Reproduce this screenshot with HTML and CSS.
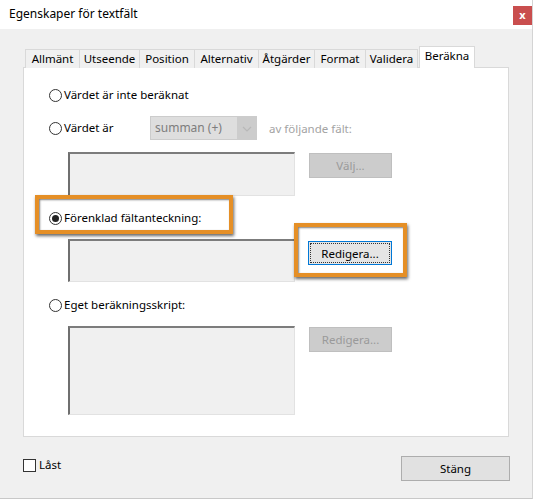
FILE: index.html
```html
<!DOCTYPE html>
<html lang="sv">
<head>
<meta charset="utf-8">
<title>Egenskaper för textfält</title>
<link rel="stylesheet" href="styles.css">
</head>
<body>
<div class="dialog">
  <div class="titlebar">
    <span class="title">Egenskaper för textfält</span>
    <span class="close">x</span>
  </div>
  <div class="body">
    <div class="tabs">
      <div class="tab w1">Allmänt</div>
      <div class="tab w2">Utseende</div>
      <div class="tab w3">Position</div>
      <div class="tab w4">Alternativ</div>
      <div class="tab w5">Åtgärder</div>
      <div class="tab w6">Format</div>
      <div class="tab w7">Validera</div>
      <div class="tab active w8">Beräkna</div>
    </div>
    <div class="panel">
      <div class="row r1">
        <span class="radio"></span><span class="label">Värdet är inte beräknat</span>
      </div>
      <div class="row r2">
        <div class="opt-fixed"><span class="radio"></span><span class="label">Värdet är</span></div>
        <div class="combo">
          <span class="combo-text">summan (+)</span>
          <span class="combo-arrow">
            <svg width="10" height="6" viewBox="0 0 10 6"><path d="M1 1 L5 5 L9 1" fill="none" stroke="#b8b8b8" stroke-width="1.2"/></svg>
          </span>
        </div>
        <span class="muted">av följande fält:</span>
      </div>
      <div class="row r3">
        <div class="field f-small"></div>
        <button class="btn disabled">Välj...</button>
      </div>
      <div class="row r4">
        <div class="highlight-wrap">
          <span class="radio checked"></span><span class="label">Förenklad fältanteckning:</span>
          <span class="hl hl-label"></span>
        </div>
      </div>
      <div class="row r5">
        <div class="field f-small2"></div>
        <div class="btn-wrap">
          <button class="btn focused"><span class="focus-ring">Redigera...</span></button>
          <span class="hl hl-btn"></span>
        </div>
      </div>
      <div class="row r6">
        <span class="radio"></span><span class="label">Eget beräkningsskript:</span>
      </div>
      <div class="row r7">
        <div class="field f-large"></div>
        <button class="btn disabled">Redigera...</button>
      </div>
    </div>
    <div class="footer">
      <div class="check"><span class="box"></span><span class="label">Låst</span></div>
      <button class="btn close-btn">Stäng</button>
    </div>
  </div>
</div>
</body>
</html>
```

FILE: styles.css
```css
* { box-sizing: border-box; }
html, body {
  margin: 0;
  padding: 0;
  background: #ffffff;
  font-family: "Noto Sans", "Open Sans", sans-serif;
  font-size: 11.5px;
  color: #000;
}
.dialog {
  width: 533px;
  height: 499px;
  display: flex;
  flex-direction: column;
  border-right: 1px solid #d4d4d4;
  border-bottom: 1px solid #c8c8c8;
}
.titlebar {
  height: 29px;
  background: #fff;
  display: flex;
  align-items: flex-start;
  justify-content: space-between;
}
.title {
  margin-left: 9px;
  margin-top: 6px;
  line-height: 16px;
  font-size: 12px;
}
.close {
  width: 19px;
  height: 19px;
  margin-top: 6px;
  background: #c94e4e;
  color: #fff;
  font-size: 11px;
  font-weight: bold;
  line-height: 18px;
  text-align: center;
}
.body {
  flex: 1;
  background: #f0f0f0;
  padding: 18px 0 0 23px;
  display: flex;
  flex-direction: column;
}
.tabs {
  display: flex;
  align-items: flex-end;
  height: 21px;
  padding-left: 2px;
  position: relative;
  z-index: 1;
  margin-bottom: -1px;
}
.tab {
  height: 19px;
  border: 1px solid #d9d9d9;
  border-bottom: none;
  border-right: none;
  background: #f0f0f0;
  text-align: center;
  line-height: 17px;
}
.tab.w7 { border-right: 1px solid #d9d9d9; }
.tab.active {
  height: 22px;
  background: #fff;
  border-right: 1px solid #d9d9d9;
  border-left: 1px solid #d9d9d9;
  line-height: 18px;
  margin-left: 1px;
}
.w1 { width: 54px; }
.w2 { width: 60px; }
.w3 { width: 55px; }
.w4 { width: 64px; }
.w5 { width: 56px; }
.w6 { width: 51px; }
.w7 { width: 53px; }
.w8 { width: 56px; }

.panel {
  width: 486px;
  height: 370px;
  background: #fff;
  border: 1px solid #d9d9d9;
  padding: 17px 0 0 25px;
  display: flex;
  flex-direction: column;
}
.row {
  display: flex;
  align-items: center;
}
.r1 { height: 20px; }
.r2 { height: 24px; margin-top: 11px; }
.r3 { height: 44px; margin-top: 12px; align-items: flex-start; padding-left: 19px; }
.r4 { height: 20px; margin-top: 12px; }
.r5 { height: 43px; margin-top: 11px; align-items: flex-start; padding-left: 19px; }
.r6 { height: 20px; margin-top: 13px; }
.r7 { height: 89px; margin-top: 11px; align-items: flex-start; padding-left: 19px; }

.radio {
  width: 13px;
  height: 13px;
  border: 1px solid #333;
  border-radius: 50%;
  background: #fff;
  display: inline-flex;
  align-items: center;
  justify-content: center;
  flex: none;
}
.radio.checked::after {
  content: "";
  width: 7px;
  height: 7px;
  border-radius: 50%;
  background: #222;
}
.label {
  margin-left: 2px;
  line-height: 16px;
}
.opt-fixed {
  width: 101px;
  display: flex;
  align-items: center;
}
.combo {
  width: 107px;
  height: 24px;
  background: #cccccc;
  display: flex;
  padding: 1px;
}
.combo-text {
  width: 86px;
  background: #dedede;
  color: #7d7d7d;
  padding-left: 4px;
  line-height: 22px;
  font-size: 12px;
}
.combo-arrow {
  flex: 1;
  display: flex;
  align-items: center;
  justify-content: center;
  padding-top: 2px;
}
.muted {
  color: #a3a3a3;
  margin-left: 12px;
}
.field {
  width: 227px;
  background: #f0f0f0;
  border-left: 2px solid #6f6f6f;
  border-top: 2px solid #7c7c7c;
  border-right: 1px solid #e2e2e2;
  border-bottom: 1px solid #e2e2e2;
}
.f-small { height: 44px; }
.f-small2 { height: 43px; }
.f-large { height: 89px; }
.btn {
  font-family: inherit;
  font-size: 11.5px;
  width: 83px;
  height: 25px;
  margin: 1px 0 0 14px;
  padding: 0;
  border: 1px solid #adadad;
  background: #e1e1e1;
  color: #000;
}
.btn.disabled {
  background: #cccccc;
  border-color: #bfbfbf;
  color: #9a9a9a;
}
.btn-wrap {
  position: relative;
  margin: 2px 0 0 13px;
}
.btn.focused {
  margin: 0;
  width: 84px;
  height: 24px;
  border: 1px solid #0078d7;
  padding: 1px;
  background: #e5e5e5;
}
.focus-ring {
  display: flex;
  height: 100%;
  align-items: center;
  justify-content: center;
  border: 1px dotted #333;
}
.highlight-wrap {
  position: relative;
  display: flex;
  align-items: center;
  width: 170px;
}
.hl {
  position: absolute;
  border: 4px solid #e58f26;
  box-shadow: 1px 2px 3px rgba(0,0,0,0.6), inset 1px 1px 2px rgba(0,0,0,0.5);
  pointer-events: none;
}
.hl-label {
  top: -15px;
  bottom: -8px;
  left: -14px;
  right: -14px;
}
.hl-btn {
  top: -18px;
  bottom: -12px;
  left: -14px;
  right: -15px;
}
.footer {
  display: flex;
  justify-content: space-between;
  align-items: flex-start;
  padding-top: 19px;
  width: 487px;
}
.check {
  display: flex;
  align-items: center;
  margin-top: 1px;
}
.box {
  width: 13px;
  height: 13px;
  border: 1px solid #333;
  background: #fff;
}
.check .label { margin-left: 3px; }
.close-btn {
  width: 109px;
  height: 25px;
  margin: 0;
}
```
